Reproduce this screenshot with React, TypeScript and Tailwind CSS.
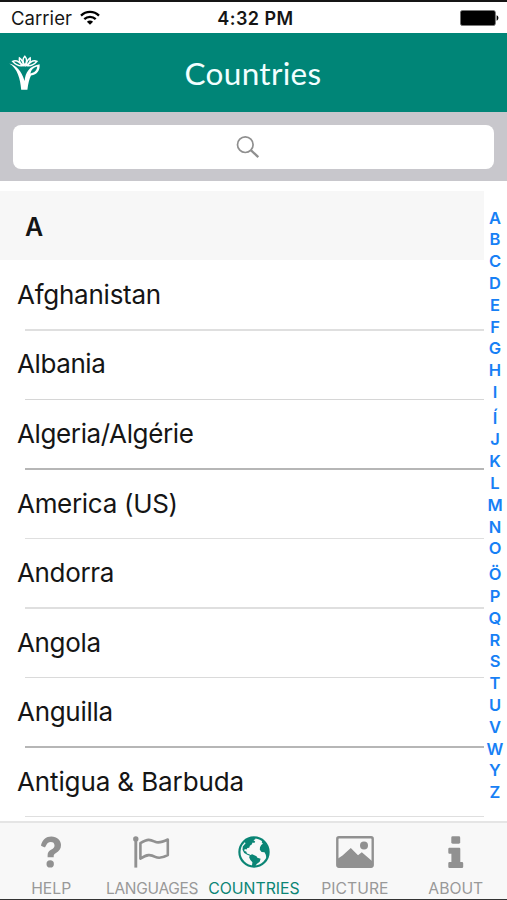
import React from "react";

const countries = [
  { name: "Afghanistan", line: "bg-[#dfdfdf]", tracking: "tracking-[-0.25px]" },
  { name: "Albania", line: "bg-[#d6d6d6]", tracking: "tracking-[-0.4px]" },
  { name: "Algeria/Algérie", line: "bg-[#b6b6b6]", tracking: "tracking-[-0.38px]" },
  { name: "America (US)", line: "bg-[#dfdfdf]", tracking: "tracking-[-0.3px]" },
  { name: "Andorra", line: "bg-[#dfdfdf]", tracking: "tracking-[-0.35px]" },
  { name: "Angola", line: "bg-[#dadada]", tracking: "tracking-[-0.35px]" },
  { name: "Anguilla", line: "bg-[#b6b6b6]", tracking: "tracking-[-0.3px]" },
  { name: "Antigua & Barbuda", line: "bg-[#dfdfdf]", tracking: "tracking-[-0.12px]" },
];

const letters = "ABCDEFGHIÍJKLMNOÖPQRSTUVWYZ".split("");

function Wifi() {
  return (
    <svg width="20" height="16" viewBox="0 0 20 16" fill="none" stroke="#000" strokeWidth="2.3">
      <path d="M1 5.6C6 .7 14 .7 19 5.6" />
      <path d="M4.3 9.1C7.5 6 12.5 6 15.7 9.1" />
      <path d="M10 14.8 6.9 11.7C8.7 10.1 11.3 10.1 13.1 11.7Z" fill="#000" stroke="none" />
    </svg>
  );
}

function Battery() {
  return (
    <svg width="39" height="16" viewBox="0 0 39 16">
      <rect x=".4" y=".4" width="35" height="15.2" rx="2.2" fill="#000" stroke="#777" strokeWidth=".8" />
      <path d="M36.6 5.3C39 6 39 10 36.6 10.7Z" fill="#000" />
    </svg>
  );
}

function Logo() {
  return (
    <svg width="32" height="36" viewBox="0 0 32 36" fill="none" stroke="#fff">
      <path d="M.3 8.6C7 10.5 12.4 15.5 15.6 26C16.4 17.5 20 11 30.6 9.2C31.2 15.5 28.2 19.4 22 20.6C20.3 24 19.2 28.5 18.4 34.8H12.2C11.3 24 8.5 13.5 .3 8.6Z" fill="#fff" stroke="none" />
      <path d="M21.4 18.4C22 14.8 24.4 12.4 28.2 11.5C28 15.4 25.5 17.6 21.4 18.4Z" fill="#008577" stroke="none" />
      <path d="M15.8 1.2C13.6 3.6 13.6 7 15.8 10C18 7 18 3.6 15.8 1.2ZM10.4 2.8C9.7 6 11.4 8.7 14.6 10.6C14.2 7 12.8 4.4 10.4 2.8ZM21.2 2.8C21.9 6 20.2 8.7 17 10.6C17.4 7 18.8 4.4 21.2 2.8ZM3.6 6.3C7 5 10.2 6.4 13 10.8C9 11.4 6.2 9.2 3.6 6.3ZM28 6.3C24.6 5 21.4 6.4 18.6 10.8C22.6 11.4 25.4 9.2 28 6.3Z" strokeWidth="1.4" />
    </svg>
  );
}

function SearchIcon() {
  return (
    <svg width="24" height="24" viewBox="0 0 24 24" fill="none" stroke="#8f8f8f">
      <circle cx="9.3" cy="9.7" r="7.8" strokeWidth="1.7" />
      <path d="m14.8 15.2 7.5 6.9" strokeWidth="2.3" />
    </svg>
  );
}

function QuestionIcon() {
  return (
    <svg width="20" height="32" viewBox="0 0 20 32" fill="#919191">
      <path d="M0 9.2C1.5 3.4 5 .5 10.3 .5C16 .5 20 4.3 20 9.1C20 13 18 15.3 15 17C13.2 18 12.7 18.8 12.7 20.2V21.2H6.6V19.3C6.6 16.6 8.1 14.9 10.4 13.6C12.6 12.4 13.5 11.3 13.5 9.4C13.5 7.3 12.1 6.1 9.8 6.1C7.1 6.1 6.1 7.6 4.5 10.4C4.1 11.1 3.8 11.5 3.2 11.2L.5 10.1C.1 9.9-.1 9.7 0 9.2Z" />
      <circle cx="9.2" cy="27.9" r="3.7" />
    </svg>
  );
}

function InfoIcon() {
  return (
    <svg width="16" height="32" viewBox="0 0 16 32" fill="#919191">
      <rect x="3.3" y=".3" width="8.9" height="7.4" rx="1.4" />
      <path d="M1.4 11.7H11.2Q12.3 11.7 12.3 12.8V26H13.9Q15.2 26 15.2 27.3V30.7Q15.2 31.9 13.9 31.9H1.5Q.3 31.9 .3 30.7V27.3Q.3 26 1.5 26H3.4V17.8H1.4Q.3 17.8 .3 16.6V12.9Q.3 11.7 1.4 11.7Z" />
    </svg>
  );
}

function FlagIcon() {
  return (
    <svg width="38" height="32" viewBox="0 0 38 32" fill="none" stroke="#919191">
      <circle cx="2.8" cy="3" r="2.7" fill="#919191" stroke="none" />
      <path d="M2.8 3V31.6" strokeWidth="2.9" />
      <path d="M7.4 7.2C15.1 2.4 17.1 3.5 22.1 5.8C25.8 7.5 29.8 6 34.8 3.5V19.1C29.1 22.2 26 22.8 22.2 20.8C17.2 18.2 14.3 18.4 7.4 22.6Z" strokeWidth="2.6" strokeLinejoin="round" />
    </svg>
  );
}

function GlobeIcon() {
  return (
    <svg width="32" height="32" viewBox="0 0 32 32" fill="#0b8575">
      <circle cx="16" cy="16" r="14.6" fill="none" stroke="#0b8575" strokeWidth="2.2" />
      <path d="M6 5.2C9 2.2 12 1 16.2 1L17.6 3L15.5 4.2L17.2 5.5L16.3 7.1L14.7 6.6L13.3 8.9L12 9.5L11.2 11.7L9.4 12.1L8.5 13.6L6.7 13L6.3 15.1L8.2 15.6L9 17.6L11.8 18.4L12.2 19.8L9.8 18.9L6.2 17L4.5 13.8L4.8 10.4L7.6 7.2Z" />
      <path d="M11.7 19.2L14.2 18.2L18.5 20.2L19.4 21.7L22.6 22.7L21.7 25.8L18.7 27.9L16.8 31L13.9 30.3L14.4 26.2L12.4 24.1L11.2 21.5Z" />
      <path d="M24.6 4.2L27.2 6.2C30 8.8 31.2 13 30.6 18L28.5 22.5L27.8 18.7L26.5 16.3L23.6 16L21.8 13.8L22 11.2L23.2 8.9L24.9 7.8L23.7 6.2Z" />
    </svg>
  );
}

function PictureIcon() {
  return (
    <svg width="38" height="32" viewBox="0 0 38 32" fill="#919191">
      <rect x="1.3" y="1.3" width="35.4" height="29.4" rx="1.6" fill="none" stroke="#919191" strokeWidth="2.4" />
      <circle cx="28" cy="9.5" r="4" />
      <path d="M2 22.5 6.5 19.5 14.8 12 22 19.2 25.8 16.2 36 25V31H2Z" />
    </svg>
  );
}

const tabs = [
  { label: "HELP", icon: <QuestionIcon />, pad: "pl-px", text: "text-[15.7px] tracking-[0px] text-[#999]" },
  { label: "LANGUAGES", icon: <FlagIcon />, pad: "", text: "text-[15.5px] tracking-[-0.3px] text-[#999]" },
  { label: "COUNTRIES", icon: <GlobeIcon />, pad: "pl-px", text: "text-[15.8px] tracking-[0px] text-[#0b8575]" },
  { label: "PICTURE", icon: <PictureIcon />, pad: "", text: "text-[15.7px] tracking-[0.05px] text-[#999]" },
  { label: "ABOUT", icon: <InfoIcon />, pad: "pr-px", text: "text-[15.7px] tracking-[0px] text-[#999]" },
];

export default function App() {
  return (
    <div className="flex h-[900px] w-[507px] flex-col overflow-hidden border-t-2 border-b border-t-[#151515] border-b-[#333] bg-white font-['Inter',sans-serif] text-[#151515]">
      <div className="grid h-[31px] shrink-0 grid-cols-3 items-center pr-[8px] pl-[11px]">
        <div className="flex items-center gap-[8px] pt-px">
          <span className="pt-px text-[18.5px] tracking-[0.05px]">Carrier</span>
          <Wifi />
        </div>
        <span className="pt-px pl-px text-center text-[18px] font-semibold tracking-[0.45px]">4:32 PM</span>
        <div className="flex justify-end"><Battery /></div>
      </div>

      <header className="grid h-[79px] shrink-0 grid-cols-[1fr_auto_1fr] items-center bg-[#008577] px-[9px]">
        <Logo />
        <h1 className="pr-px font-['Lato',sans-serif] text-[31.5px] leading-[40px] tracking-[0.3px] text-[#f2ffff]">Countries</h1>
      </header>

      <div className="h-[69px] shrink-0 bg-[#c8c7cc] px-[13px] pt-[13px]">
        <div className="flex h-[44px] items-center justify-center rounded-[8px] bg-white pr-[11px]">
          <SearchIcon />
        </div>
      </div>

      <main className="flex min-h-0 flex-1 overflow-hidden pt-[10px]">
        <section className="w-[484px] shrink-0">
          <h2 className="flex h-[69px] items-center bg-[#f7f7f7] pt-[5px] pl-[25px] text-[25px] font-semibold">A</h2>
          <div className="pt-px">
            {countries.map((country) => (
              <div key={country.name} className="flex h-[69.55px] flex-col">
                <div className={`flex flex-1 items-center pb-[1.2px] pl-[17px] text-[26px] whitespace-nowrap ${country.tracking}`}>{country.name}</div>
                <div className={`ml-[25px] h-[1.5px] shrink-0 ${country.line}`} />
              </div>
            ))}
          </div>
        </section>
        <nav className="flex flex-1 flex-col items-center pt-[16.6px] pr-px text-[16.5px] leading-[21.8px] font-semibold text-[#1780f5]">
          {letters.map((letter) => (
            <span key={letter} className={letter === "Í" || letter === "Ö" ? "pt-[3.9px]" : ""}>{letter}</span>
          ))}
        </nav>
      </main>

      <footer className="grid h-[78px] shrink-0 grid-cols-5 border-t-2 border-[#e5e5e5] bg-[#f8f8f8]">
        {tabs.map((tab) => (
          <div key={tab.label} className={`flex flex-col items-center pt-[12px] ${tab.pad}`}>
            <div className="flex h-[34px] items-center">{tab.icon}</div>
            <span className={`mt-[9px] leading-[22px] ${tab.text}`}>{tab.label}</span>
          </div>
        ))}
      </footer>
    </div>
  );
}
